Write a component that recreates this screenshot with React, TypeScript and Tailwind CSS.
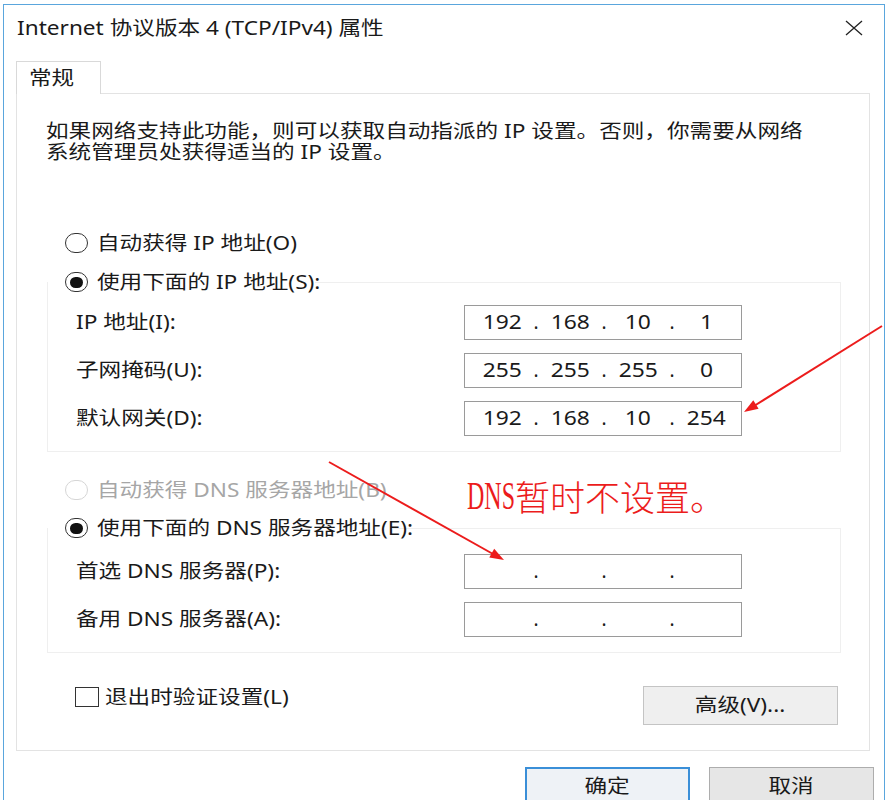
import type { ReactNode } from 'react'

// stretched text, the screenshot is wider than it is tall
function T({ children, className = '' }: { children: ReactNode; className?: string }) {
  return (
    <span className={`inline-block origin-left scale-x-[1.19] whitespace-nowrap ${className}`}>
      {children}
    </span>
  )
}

function Radio({ checked = false, disabled = false }: { checked?: boolean; disabled?: boolean }) {
  return (
    <span
      className={`flex h-[20px] w-[23px] shrink-0 items-center justify-center rounded-full border bg-white ${
        disabled ? 'border-[#d6d6d6]' : 'border-[#333333]'
      }`}
    >
      {checked && <span className="h-[11px] w-[13px] rounded-full bg-[#111111]" />}
    </span>
  )
}

function IpBox({ parts }: { parts: string[] }) {
  return (
    <div className="flex h-[35px] w-[278px] items-center border border-[#9a9a9a] bg-white pl-[6px]">
      {parts.map((p, i) => (
        <div key={i} className="flex items-center">
          {i > 0 && <span className="w-[6px] text-center">.</span>}
          <span className="flex w-[62px] justify-center">
            <span className="inline-block scale-x-[1.2]">{p}</span>
          </span>
        </div>
      ))}
    </div>
  )
}

function Row({ label, parts }: { label: string; parts: string[] }) {
  return (
    <div className="flex h-[35px] items-center">
      <div className="w-[416px] pl-[28px]">
        <T>{label}</T>
      </div>
      <IpBox parts={parts} />
    </div>
  )
}

export default function App() {
  return (
    <div className="relative h-[800px] w-[892px] overflow-hidden bg-white font-['Noto_Sans','Noto_Sans_CJK_SC',sans-serif] text-[19px] text-[#1a1a1a]">
      {/* dialog window */}
      <div className="ml-[3px] mt-[4px] h-[830px] w-[882px] border border-[#5aa6dd] bg-white">
        {/* title bar */}
        <div className="flex h-[46px] items-center justify-between pl-[13px] pr-[21px]">
          <T>Internet 协议版本 4 (TCP/IPv4) 属性</T>
          <svg width="18" height="16" viewBox="0 0 18 16" className="text-[#222]">
            <path d="M1 1 L17 15 M17 1 L1 15" stroke="currentColor" strokeWidth="1.3" fill="none" />
          </svg>
        </div>

        {/* tab */}
        <div className="pl-[12px] pt-[10px]">
          <div className="relative z-10 -mb-px flex h-[33px] w-[85px] items-center border border-b-0 border-[#d9d9d9] bg-white pl-[12px]">
            <T>常规</T>
          </div>
          <div className="h-[658px] w-[854px] border border-[#e3e3e3] bg-white">
            <div className="ml-[29px] mt-[27px] leading-[21px]">
              <T className="block">如果网络支持此功能，则可以获取自动指派的 IP 设置。否则，你需要从网络</T>
              <T className="block">系统管理员处获得适当的 IP 设置。</T>
            </div>

            <div className="ml-[48px] mt-[68px] flex h-[24px] items-center gap-[9px]">
              <Radio />
              <T>自动获得 IP 地址(O)</T>
            </div>

            {/* static IP group */}
            <div className="ml-[30px] mt-[27px] w-[794px] border border-[#efefef] pb-[15px]">
              <div className="-mt-[13px] flex h-[24px] w-fit items-center gap-[9px] bg-white pl-[17px] pr-[30px]">
                <Radio checked />
                <T>使用下面的 IP 地址(S):</T>
              </div>
              <div className="mt-[11px] flex flex-col gap-[13px]">
                <Row label="IP 地址(I):" parts={['192', '168', '10', '1']} />
                <Row label="子网掩码(U):" parts={['255', '255', '255', '0']} />
                <Row label="默认网关(D):" parts={['192', '168', '10', '254']} />
              </div>
            </div>

            <div className="ml-[48px] mt-[26px] flex h-[24px] items-center gap-[9px] text-[#a6a6a6]">
              <Radio disabled />
              <T>自动获得 DNS 服务器地址(B)</T>
            </div>

            {/* DNS group */}
            <div className="ml-[30px] mt-[26px] w-[794px] border border-[#efefef] pb-[15px]">
              <div className="-mt-[13px] flex h-[24px] w-fit items-center gap-[9px] bg-white pl-[17px] pr-[30px]">
                <Radio checked />
                <T>使用下面的 DNS 服务器地址(E):</T>
              </div>
              <div className="mt-[14px] flex flex-col gap-[13px]">
                <Row label="首选 DNS 服务器(P):" parts={['', '', '', '']} />
                <Row label="备用 DNS 服务器(A):" parts={['', '', '', '']} />
              </div>
            </div>

            <div className="mt-[33px] flex items-start justify-between">
              <div className="ml-[58px] mt-px flex h-[20px] items-center gap-[6px]">
                <span className="h-[20px] w-[24px] border border-[#333333] bg-white" />
                <T>退出时验证设置(L)</T>
              </div>
              <button className="mr-[31px] flex h-[39px] w-[195px] items-center justify-center border border-[#c4c4c4] bg-[#efefef]">
                <span className="inline-block scale-x-[1.19]">高级(V)...</span>
              </button>
            </div>
          </div>
        </div>

        {/* dialog buttons */}
        <div className="mt-[16px] flex justify-end gap-[19px] pr-[10px]">
          <button className="flex h-[38px] w-[165px] items-center justify-center border-2 border-[#3a8fd8] bg-[#eef2f6]">
            <span className="inline-block scale-x-[1.19]">确定</span>
          </button>
          <button className="flex h-[38px] w-[165px] items-center justify-center border border-[#adadad] bg-[#e6e6e6]">
            <span className="inline-block scale-x-[1.19]">取消</span>
          </button>
        </div>
      </div>

      {/* red annotations on top of the screenshot */}
      <svg width="892" height="800" className="pointer-events-none absolute left-0 top-0">
        <g stroke="#ec1c1c" strokeWidth="2" fill="none">
          <line x1="882" y1="326" x2="754" y2="406" />
          <line x1="329" y1="462" x2="493" y2="554" />
        </g>
        <g fill="#ec1c1c">
          <polygon points="744,412 758.6,408.8 753.3,400.3" />
          <polygon points="504,560 489.3,557.6 494.2,548.8" />
        </g>
      </svg>
      <div className="pointer-events-none absolute left-[467px] top-[476px] flex items-center text-[#ec1c1c]">
        <span className="-mr-[32px] inline-block origin-left scale-x-[0.6] font-['Liberation_Serif',serif] text-[40px] leading-[40px]">
          DNS
        </span>
        <span className="font-['Noto_Sans_CJK_SC',sans-serif] text-[35px] font-light leading-[40px]">暂时不设置。</span>
      </div>
    </div>
  )
}
